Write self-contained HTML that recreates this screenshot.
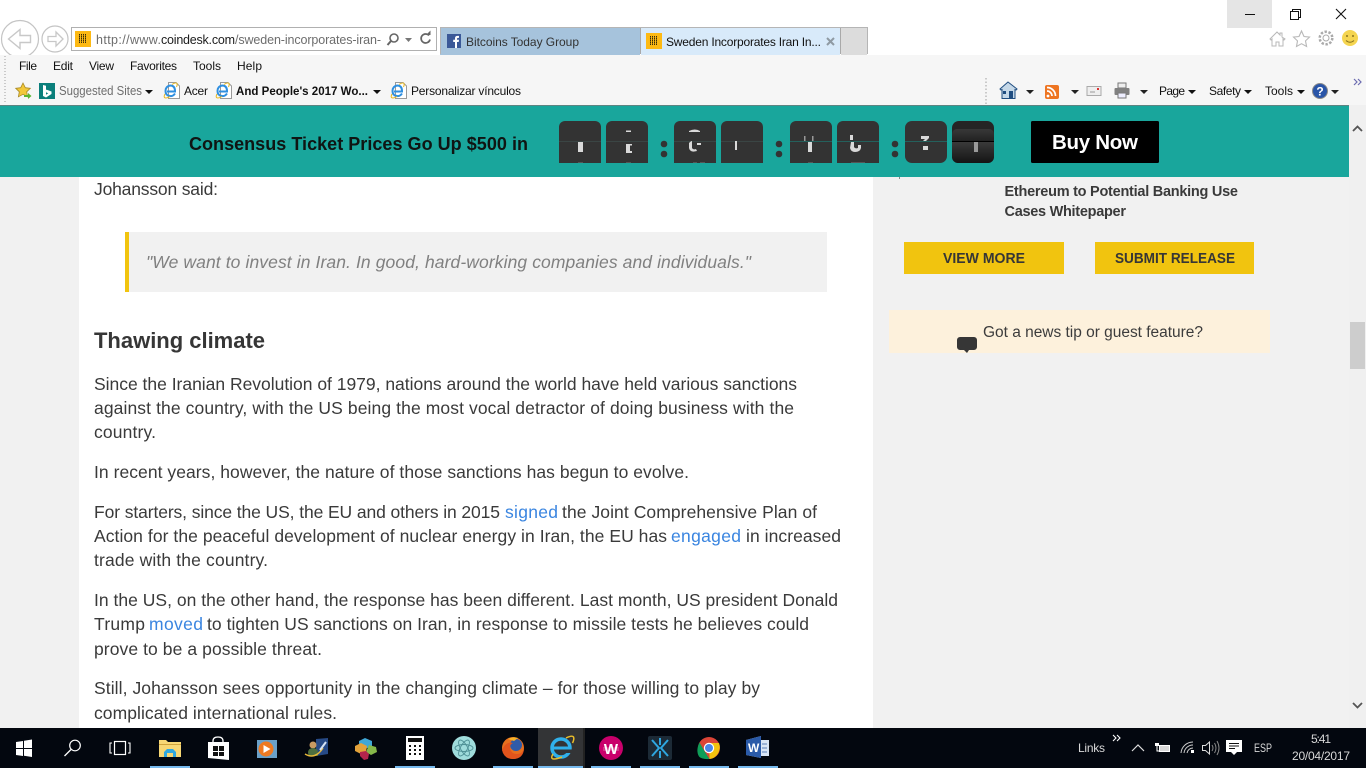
<!DOCTYPE html>
<html><head><meta charset="utf-8"><title>Sweden Incorporates Iran</title>
<style>
html,body{margin:0;padding:0;width:1366px;height:768px;overflow:hidden;background:#fff}
svg{display:block}
text{font-family:"Liberation Sans",sans-serif;white-space:pre}
.b{font-size:17.5px;fill:#3a3a3a}
.l{font-size:17.5px;fill:#3a85e0}
.m{font-size:12px;fill:#111}
.tb{font-size:12px;fill:#d8d8d8}
</style></head><body>
<svg width="1366" height="768" viewBox="0 0 1366 768" xmlns="http://www.w3.org/2000/svg">
<rect width="1366" height="768" fill="#fff"/>
<!-- window buttons -->
<rect x="1227" y="0" width="45" height="28" fill="#e5e5e5"/>
<rect x="1245" y="14" width="10" height="1" fill="#111"/>
<path d="M1290.500 11.500h8v8h-8zM1292.500 11.500v-2h8v8h-2" fill="none" stroke="#111"/>
<path d="M1336 9l10 10M1346 9l-10 10" stroke="#111" stroke-width="1.100"/>
<!-- nav buttons (drawn under the toolbar) -->
<circle cx="20" cy="39" r="18.500" fill="#fff" stroke="#c4c4c4" stroke-width="1.200"/>
<path d="M8.500 39L20 29.500v6h10.500v7H20v6z" fill="none" stroke="#c8c8c8" stroke-width="1.400"/>
<circle cx="55" cy="39" r="13" fill="#fff" stroke="#c4c4c4" stroke-width="1.200"/>
<path d="M63 39l-7-7v4.500h-8v5h8V46z" fill="none" stroke="#c8c8c8" stroke-width="1.300"/>
<!-- chrome bar -->
<rect x="0" y="55" width="1366" height="50" fill="#f6f6f6"/>
<!-- address bar -->
<rect x="71.500" y="27.500" width="365" height="23" fill="#fff" stroke="#b0b0b0"/>
<rect x="75" y="31" width="16" height="16" fill="#fdb913"/>
<path d="M79 34.500h8M79 36.500h8M79 38.500h8M79 40.500h8M79 42.500h8" stroke="#3a2c08" stroke-width="1" stroke-dasharray="1 1"/>
<path d="M79 35.500h8M79 37.500h8M79 39.500h8M79 41.500h8" stroke="#8a6a10" stroke-width="1" stroke-dasharray="1 1"/>
<text x="96" y="44" font-size="12.500" fill="#6d6d6d" textLength="65" lengthAdjust="spacing">http://www.</text>
<text x="161" y="44" font-size="12.500" fill="#1d1d1d" textLength="74" lengthAdjust="spacing">coindesk.com</text>
<text x="235" y="44" font-size="12.500" fill="#6d6d6d" textLength="146" lengthAdjust="spacing">/sweden-incorporates-iran-</text>
<circle cx="394" cy="38" r="4" fill="none" stroke="#666" stroke-width="1.600"/><path d="M391 41l-3.500 4" stroke="#666" stroke-width="2"/>
<path d="M405 38h7l-3.500 4z" fill="#777"/>
<path d="M429 35.500a4.500 4.500 0 1 0 1 4" fill="none" stroke="#666" stroke-width="1.700"/><path d="M426 35h4.500v-4.500z" fill="#666"/>
<!-- tabs -->
<rect x="440" y="27" width="428" height="1" fill="#b5b5b5"/>
<rect x="440" y="28" width="200" height="27" fill="#a6c3dc"/>
<rect x="640" y="28" width="1" height="26" fill="#a9a9a9"/>
<rect x="641" y="28" width="199" height="27" fill="#d8eafa"/>
<rect x="840" y="28" width="1" height="26" fill="#a9a9a9"/>
<rect x="841" y="28" width="26" height="27" fill="#dcdcdc"/>
<rect x="867" y="27" width="1" height="27" fill="#b5b5b5"/>
<rect x="440" y="28" width="1" height="26" fill="#b5b5b5"/>
<rect x="447" y="34" width="14" height="14" fill="#3b5998"/>
<path d="M455 48v-6h-1.800v-2.200h1.800v-1.600q0-2.300 2.500-2.300h1.500v2h-1q-1 0-1 1v.9h2l-.3 2.200h-1.700v6z" fill="#fff"/>
<text x="466" y="46" class="m" style="fill:#333" textLength="113" lengthAdjust="spacing">Bitcoins Today Group</text>
<rect x="646" y="33" width="16" height="16" fill="#fdb913"/>
<path d="M650 36.500h8M650 38.500h8M650 40.500h8M650 42.500h8M650 44.500h8" stroke="#3a2c08" stroke-width="1" stroke-dasharray="1 1"/>
<path d="M650 37.500h8M650 39.500h8M650 41.500h8M650 43.500h8" stroke="#8a6a10" stroke-width="1" stroke-dasharray="1 1"/>
<text x="666" y="46" class="m" textLength="155" lengthAdjust="spacing">Sweden Incorporates Iran In...</text>
<path d="M827 38l7 7M834 38l-7 7" stroke="#8f9aa3" stroke-width="2"/>
<!-- top-right icons -->
<path d="M1270 39l7-7 3 3v-2h2v4l3 2-1 1-1-1v7h-4v-4h-3v4h-4v-7l-1 1z" fill="#fff" stroke="#b8b8b8"/>
<path d="M1301.500 31l2.500 5.500 5.500.6-4 3.800 1.100 5.600-5.100-2.800-5 2.800 1-5.600-4-3.800 5.500-.6z" fill="#fff" stroke="#b8b8b8" stroke-width="1.100"/>
<circle cx="1326" cy="38" r="3" fill="none" stroke="#aaa"/><circle cx="1326" cy="38" r="6.300" fill="none" stroke="#aaa" stroke-width="2.500" stroke-dasharray="2.400 1.600"/>
<circle cx="1350" cy="38" r="8" fill="#f5d550"/><circle cx="1347" cy="36" r="1" fill="#8a7420"/><circle cx="1353" cy="36" r="1" fill="#8a7420"/>
<path d="M1346 40.500q4 3.500 8 0" fill="none" stroke="#8a7420"/>
<!-- menu -->
<path d="M5 56v48" stroke="#bbb" stroke-dasharray="1 2" stroke-width="1.500"/>
<text x="19" y="70" class="m" textLength="18" lengthAdjust="spacing">File</text>
<text x="53" y="70" class="m" textLength="20" lengthAdjust="spacing">Edit</text>
<text x="89" y="70" class="m" textLength="25" lengthAdjust="spacing">View</text>
<text x="130" y="70" class="m" textLength="47" lengthAdjust="spacing">Favorites</text>
<text x="193" y="70" class="m" textLength="28" lengthAdjust="spacing">Tools</text>
<text x="237" y="70" class="m" textLength="25" lengthAdjust="spacing">Help</text>
<!-- favorites bar -->
<path d="M23 83l2.300 4.700 5 .6-3.600 3.500.9 5-4.600-2.500-4.600 2.500.9-5-3.600-3.500 5-.6z" fill="#f2c83a" stroke="#a98a25" stroke-width=".8"/>
<path d="M24 95h4v-2l3.500 3-3.500 3v-2h-4z" fill="#5cb531"/>
<rect x="39" y="83" width="16" height="16" fill="#0b7f7b"/>
<path d="M43 85v11l3 1.500 5.500-3.500v-2.500l-4-1.500-2-.5.800 3 2 .8-2.300 1.400v-9z" fill="#fff"/>
<text x="59" y="95" font-size="12.500" fill="#6e6e6e" textLength="83" lengthAdjust="spacingAndGlyphs">Suggested Sites</text>
<path d="M145 90h8l-4 4z" fill="#111"/>
<g id="ie1">
<path d="M168.500 82.500h7.500l3.500 3.500v12.500h-11z" fill="#fff" stroke="#9a9a9a"/>
<path d="M175 93.500q-2 3-5 2.500-4.500-.5-4.500-5t4.500-5.500q5 0 5 5.500v.5h-8" fill="none" stroke="#2f8fe0" stroke-width="2"/>
<path d="M165 94q-2 4 1 4 2 0 4-1.500M172 84.500q4-2.500 5-1 .5 1.500-.5 3.500" fill="none" stroke="#e8b820" stroke-width="1"/>
</g>
<text x="184" y="95" class="m" textLength="24" lengthAdjust="spacing">Acer</text>
<use href="#ie1" x="52"/>
<text x="236" y="95" class="m" font-weight="bold" textLength="132" lengthAdjust="spacingAndGlyphs">And People's 2017 Wo...</text>
<path d="M373 90h8l-4 4z" fill="#111"/>
<use href="#ie1" x="227"/>
<text x="411" y="95" class="m" textLength="110" lengthAdjust="spacing">Personalizar vínculos</text>
<!-- right toolbar -->
<path d="M986 78v26" stroke="#bbb" stroke-dasharray="1.500 2" stroke-width="1.500"/>
<path d="M1008 82l-8 7 1 1 1-.5v9h13v-9l1 .5 1-1z" fill="#c5d8e8" stroke="#1f4d80"/>
<rect x="1009" y="91" width="4" height="8" fill="#1f4d80"/><rect x="1003" y="91" width="3" height="3" fill="#1f4d80"/>
<path d="M1026 90h8l-4 4zM1071 90h8l-4 4zM1140 90h8l-4 4z" fill="#222"/>
<rect x="1045" y="85" width="14" height="14" rx="2" fill="#ee7522"/>
<circle cx="1048" cy="96" r="1.400" fill="#fff"/><path d="M1047 91a5 5 0 0 1 5 5M1047 87.500a8.500 8.500 0 0 1 8.500 8.500" fill="none" stroke="#fff" stroke-width="1.700"/>
<rect x="1087" y="86.500" width="14" height="9" fill="#eee" stroke="#aaa"/><path d="M1090 92h5" stroke="#999"/><rect x="1097" y="88" width="2" height="2" fill="#d33"/>
<rect x="1118" y="83" width="8" height="5" fill="#eee" stroke="#777"/>
<rect x="1114.500" y="88" width="15" height="7" rx="1" fill="#808080"/>
<rect x="1118" y="93" width="8" height="5" fill="#eef" stroke="#777"/>
<text x="1159" y="95" class="m" textLength="26" lengthAdjust="spacing">Page</text><path d="M1188 90h8l-4 4z" fill="#111"/>
<text x="1209" y="95" class="m" textLength="32" lengthAdjust="spacing">Safety</text><path d="M1244 90h8l-4 4z" fill="#111"/>
<text x="1265" y="95" class="m" textLength="28" lengthAdjust="spacing">Tools</text><path d="M1297 90h8l-4 4z" fill="#111"/>
<circle cx="1320" cy="91" r="7.500" fill="#2a55a8" stroke="#8a8a8a" stroke-width="1"/>
<text x="1320" y="95.500" font-size="12" font-weight="bold" text-anchor="middle" style="fill:#fff">?</text>
<path d="M1331 90h8l-4 4z" fill="#222"/>
<path d="M1354 79l3 3-3 3M1358 79l3 3-3 3" fill="none" stroke="#6b6bb0" stroke-width="1.200"/>
<!-- page -->
<rect x="0" y="105" width="1366" height="623" fill="#f1f1f1"/>
<rect x="79" y="177" width="794" height="551" fill="#fff"/>
<!-- scrollbar -->
<rect x="1349" y="105" width="17" height="623" fill="#f0f0f0"/>
<rect x="1350" y="322" width="15" height="47" fill="#cdcdcd"/>
<path d="M1353 131l4.500-4.500 4.500 4.500M1353 703l4.500 4.500 4.500-4.500" fill="none" stroke="#555" stroke-width="1.800"/>
<!-- article -->
<text x="94" y="195" class="b" textLength="124" lengthAdjust="spacing">Johansson said:</text>
<rect x="125" y="232" width="702" height="60" fill="#f1f1f1"/>
<rect x="125" y="232" width="4" height="60" fill="#f1c40f"/>
<text x="146" y="268" font-size="17.500" font-style="italic" fill="#808080" textLength="605" lengthAdjust="spacing">"We want to invest in Iran. In good, hard-working companies and individuals."</text>
<text x="94" y="348" font-size="22" font-weight="bold" fill="#363636" textLength="171" lengthAdjust="spacing">Thawing climate</text>
<text x="94" y="390" class="b" textLength="703" lengthAdjust="spacing">Since the Iranian Revolution of 1979, nations around the world have held various sanctions</text>
<text x="94" y="414" class="b" textLength="700" lengthAdjust="spacing">against the country, with the US being the most vocal detractor of doing business with the</text>
<text x="94" y="438" class="b" textLength="62" lengthAdjust="spacing">country.</text>
<text x="94" y="478" class="b" textLength="595" lengthAdjust="spacing">In recent years, however, the nature of those sanctions has begun to evolve.</text>
<text x="94" y="518" class="b" textLength="406" lengthAdjust="spacing">For starters, since the US, the EU and others in 2015</text>
<text x="505" y="518" class="l" textLength="53" lengthAdjust="spacing">signed</text>
<text x="562" y="518" class="b" textLength="255" lengthAdjust="spacing">the Joint Comprehensive Plan of</text>
<text x="94" y="542" class="b" textLength="573" lengthAdjust="spacing">Action for the peaceful development of nuclear energy in Iran, the EU has</text>
<text x="671" y="542" class="l" textLength="70" lengthAdjust="spacing">engaged</text>
<text x="746" y="542" class="b" textLength="95" lengthAdjust="spacing">in increased</text>
<text x="94" y="566" class="b" textLength="174" lengthAdjust="spacing">trade with the country.</text>
<text x="94" y="606" class="b" textLength="744" lengthAdjust="spacing">In the US, on the other hand, the response has been different. Last month, US president Donald</text>
<text x="94" y="630" class="b" textLength="51" lengthAdjust="spacing">Trump</text>
<text x="149" y="630" class="l" textLength="54" lengthAdjust="spacing">moved</text>
<text x="207" y="630" class="b" textLength="602" lengthAdjust="spacing">to tighten US sanctions on Iran, in response to missile tests he believes could</text>
<text x="94" y="655" class="b" textLength="228" lengthAdjust="spacing">prove to be a possible threat.</text>
<text x="94" y="694" class="b" textLength="666" lengthAdjust="spacing">Still, Johansson sees opportunity in the changing climate – for those willing to play by</text>
<text x="94" y="719" class="b" textLength="243" lengthAdjust="spacing">complicated international rules.</text>
<!-- sidebar -->
<text x="1004.500" y="196" font-size="14.500" font-weight="bold" fill="#3a3a3a" textLength="233.500" lengthAdjust="spacing">Ethereum to Potential Banking Use</text>
<text x="1004.500" y="216" font-size="14.500" font-weight="bold" fill="#3a3a3a" textLength="121.500" lengthAdjust="spacing">Cases Whitepaper</text>
<rect x="904" y="242" width="160" height="32" fill="#f1c40f"/>
<rect x="1095" y="242" width="159" height="32" fill="#f1c40f"/>
<text x="943" y="263" font-size="14.500" font-weight="bold" fill="#363636" textLength="82" lengthAdjust="spacingAndGlyphs">VIEW MORE</text>
<text x="1115" y="263" font-size="14.500" font-weight="bold" fill="#363636" textLength="120" lengthAdjust="spacingAndGlyphs">SUBMIT RELEASE</text>
<rect x="889" y="310" width="381" height="43" fill="#fdf1dc"/>
<text x="983" y="337" font-size="15.500" fill="#3c3c3c" textLength="220" lengthAdjust="spacing">Got a news tip or guest feature?</text>
<path d="M960 337h14a3 3 0 0 1 3 3v7a3 3 0 0 1-3 3h-5l-2 3-3-3h-4a3 3 0 0 1-3-3v-7a3 3 0 0 1 3-3z" fill="#363636"/>
<!-- banner -->
<rect x="0" y="105" width="1349" height="72" fill="#19a69c"/>
<rect x="0" y="105" width="1349" height="1" fill="#5e8482"/>
<rect x="899" y="177" width="1" height="2" fill="#888"/>
<text x="189" y="150" font-size="18" font-weight="bold" fill="#0f1513" textLength="339" lengthAdjust="spacing">Consensus Ticket Prices Go Up $500 in</text>
<rect x="1031" y="121" width="128" height="42" rx="1.500" fill="#000"/>
<text x="1052" y="149" font-size="20.500" font-weight="bold" fill="#fff" textLength="86" lengthAdjust="spacing">Buy Now</text>
<g fill="#333">
<path d="M559 163v-36a6 6 0 0 1 6-6h30a6 6 0 0 1 6 6v36z"/>
<path d="M606 163v-36a6 6 0 0 1 6-6h30a6 6 0 0 1 6 6v36z"/>
<path d="M674 163v-36a6 6 0 0 1 6-6h30a6 6 0 0 1 6 6v36z"/>
<path d="M721 163v-36a6 6 0 0 1 6-6h30a6 6 0 0 1 6 6v36z"/>
<path d="M790 163v-36a6 6 0 0 1 6-6h30a6 6 0 0 1 6 6v36z"/>
<path d="M837 163v-36a6 6 0 0 1 6-6h30a6 6 0 0 1 6 6v36z"/>
<rect x="905" y="121" width="42" height="42" rx="7"/>
<circle cx="664" cy="144" r="3.300"/><circle cx="664" cy="154" r="3.300"/>
<circle cx="779" cy="144" r="3.300"/><circle cx="779" cy="154" r="3.300"/>
<circle cx="895" cy="144" r="3.300"/><circle cx="895" cy="154" r="3.300"/>
</g>
<defs><linearGradient id="g1" x1="0" y1="0" x2="0" y2="1"><stop offset="0" stop-color="#383838"/><stop offset="1" stop-color="#222"/></linearGradient>
<linearGradient id="g2" x1="0" y1="0" x2="0" y2="1"><stop offset="0" stop-color="#3a3a3a"/><stop offset="1" stop-color="#141414"/></linearGradient></defs>
<rect x="952" y="121" width="42" height="42" rx="7" fill="#252525"/>
<rect x="952" y="129" width="42" height="12" rx="5" fill="url(#g1)"/>
<rect x="952" y="141" width="42" height="1" fill="#000"/>
<path d="M952 142h42v15a6 6 0 0 1-6 6h-30a6 6 0 0 1-6-6z" fill="url(#g2)"/>
<path d="M559 141.500h42M606 141.500h42M674 141.500h42M721 141.500h42" stroke="#3a4544" stroke-width="1"/>
<path d="M790 141.500h42M837 141.500h42M905 141.500h42" stroke="#24605c" stroke-width="1"/>
<g fill="#d9d9d9">
<rect x="578" y="142" width="5" height="10"/>
<rect x="626" y="144" width="4" height="9"/><rect x="630" y="144" width="2" height="1.500"/><rect x="630" y="151" width="2" height="2"/><rect x="626" y="130.500" width="5" height="1.500"/>
<path d="M689 131q6-3 11 0v1h-11zM689 143q2-2 3-2v7q1 2 4 1l1 2q-7 2-8-3zM697 143h4v2h-4z"/>
<rect x="735" y="141" width="2" height="9"/>
<rect x="804" y="136" width="1.500" height="5" fill="#999"/><rect x="812" y="136" width="1.500" height="5" fill="#999"/><rect x="808" y="142" width="4" height="10"/>
<path d="M850 135h3v5h-3zM851 142h3v5q1 2 4 1v-3h3v3q-1 4-6 4-4 0-5-4z"/>
<path d="M921 136h8v2l-3 3h-3l2-2h-4zM923 146h5v4h-5z"/>
<rect x="974" y="142" width="4" height="10" fill="#9a9a9a"/>
</g>
<g fill="#555"><rect x="578" y="162" width="5" height="1"/><rect x="626" y="162" width="5" height="1"/><rect x="693" y="162" width="4" height="1"/><rect x="700" y="162" width="5" height="1"/><rect x="808" y="162" width="5" height="1"/><rect x="851" y="162" width="14" height="1"/></g>
<!-- taskbar -->
<rect x="0" y="728" width="1366" height="40" fill="#03070f"/>
<rect x="538" y="728" width="47" height="40" fill="#333436"/>
<rect x="583" y="728" width="2" height="40" fill="#222"/>
<g fill="#76b9ed">
<rect x="150" y="766" width="40" height="2"/><rect x="395" y="766" width="40" height="2"/><rect x="493" y="766" width="40" height="2"/><rect x="538" y="766" width="45" height="2"/><rect x="591" y="766" width="40" height="2"/><rect x="640" y="766" width="40" height="2"/><rect x="689" y="766" width="40" height="2"/><rect x="738" y="766" width="40" height="2"/>
</g>
<path d="M16 742l7-1v7h-7zM24 740.800l8-1.300v8.500h-8zM16 749h7v7l-7-1zM24 749h8v8l-8-1.200z" fill="#fff"/>
<circle cx="75" cy="745.500" r="5.300" fill="none" stroke="#fff" stroke-width="1.200"/><path d="M71 749.500l-6.500 6.500" stroke="#fff" stroke-width="1.300"/>
<rect x="114.500" y="741.500" width="11" height="13" fill="none" stroke="#fff" stroke-width="1.200"/>
<path d="M112 743h-2v10h2M128 743h2v10h-2" fill="none" stroke="#fff" stroke-width="1.100"/>
<!-- explorer -->
<path d="M159 740h7l2 2h13v15h-22z" fill="#f7d774"/><rect x="159" y="744" width="22" height="1" fill="#cfa33c"/>
<path d="M164 757v-5l3-3h6l3 3v5h-3v-4h-6v4z" fill="#2fa8e0"/>
<!-- store -->
<path d="M208 742h21v18l-21-2z" fill="#fff"/><path d="M213 742v-1q0-4 5-4t5 4v1" fill="none" stroke="#fff" stroke-width="1.300"/>
<path d="M213 746h5v5h-5zM219 746h5v5h-5zM213 752h5v4h-5zM219 752h5v4h-5z" fill="#111"/>
<!-- media -->
<rect x="257" y="740" width="20" height="18" fill="#6aa0c8"/><circle cx="266" cy="749" r="7.500" fill="#ee7a22"/><path d="M263.500 745l7 4-7 4z" fill="#fff"/>
<!-- person -->
<path d="M316 739l12-1v16l-12 2z" fill="#274a86"/><circle cx="313" cy="745" r="3.500" fill="#c89a62"/><path d="M308 753q0-5 5-5t5 5v3h-9z" fill="#4d6f3f"/><path d="M305 754q10 6 18-6" fill="none" stroke="#e8b93a" stroke-width="1.500"/><path d="M320 750l6-8" stroke="#d7e4f5" stroke-width="2"/>
<!-- cubes -->
<path d="M365 738l7 3v5l-7 3-6-3v-5z" fill="#3fa7d6"/><path d="M355 746l6-3 6 3-1 6-5 2-6-3z" fill="#e3a23a"/><path d="M369 745l7 2 1 5-6 3-5-3z" fill="#86b84a"/><path d="M360 752l6-1 3 3-1 5-4 1-4-4z" fill="#b3244c"/>
<!-- calc -->
<rect x="406" y="736" width="18" height="24" fill="#fff"/><rect x="408" y="738" width="14" height="4" fill="#111"/>
<g fill="#111"><rect x="409" y="745" width="2" height="2"/><rect x="414" y="745" width="2" height="2"/><rect x="419" y="745" width="2" height="2"/><rect x="409" y="749" width="2" height="2"/><rect x="414" y="749" width="2" height="2"/><rect x="419" y="749" width="2" height="2"/><rect x="409" y="753" width="2" height="2"/><rect x="414" y="753" width="2" height="2"/><rect x="419" y="753" width="2" height="2"/></g>
<!-- atom -->
<circle cx="464" cy="748" r="12" fill="#9fdcdc"/><g fill="none" stroke="#4e8f95" stroke-width=".9"><ellipse cx="464" cy="748" rx="9" ry="3.500"/><ellipse cx="464" cy="748" rx="9" ry="3.500" transform="rotate(60 464 748)"/><ellipse cx="464" cy="748" rx="9" ry="3.500" transform="rotate(120 464 748)"/></g>
<!-- firefox -->
<circle cx="513" cy="748" r="11" fill="#e76f1e"/><circle cx="516" cy="745" r="6" fill="#2f5ba8"/><path d="M502 750q2 9 11 9 10 0 11-10-2 5-7 5-6 0-7-6 0-4 3-5-7-2-11 7z" fill="#e2541c"/><path d="M508 739q5-3 10-1l-4 3z" fill="#f6b128"/>
<!-- IE -->
<circle cx="561" cy="748" r="9" fill="none" stroke="#30b0ea" stroke-width="3.500"/><rect x="553" y="746.500" width="17" height="3" fill="#30b0ea"/><rect x="561" y="749.500" width="12" height="3.500" fill="#333436"/><path d="M553 754q-3 5 1 5 3 0 8-2M566 738q6-3 7.500-1 1 2-1 6" fill="none" stroke="#e9bd2a" stroke-width="1.500"/>
<!-- wallet -->
<circle cx="611" cy="748" r="12" fill="#c9006b"/><path d="M603 748h16M603 750h16" stroke="#e98ab8" stroke-width=".7"/><text x="611" y="754" font-size="15" font-weight="bold" text-anchor="middle" style="fill:#fff">W</text>
<!-- blue x -->
<rect x="648" y="736" width="24" height="24" rx="2" fill="#1c2a36"/><path d="M652 740l7 8-7 8M668 740l-7 8 7 8M660 738v7M660 751v7" fill="none" stroke="#2ea6e0" stroke-width="2"/>
<!-- chrome -->
<circle cx="709" cy="748" r="11" fill="#db4437"/><path d="M699.500 742.500l5.500 9.500 4.500 7q-8 .5-10.500-2.500-3.500-6 .5-14z" fill="#0f9d58"/><path d="M709 743h10q2 5-1 10.500-3 5-8.500 5.500z" fill="#f4c20d"/><circle cx="709" cy="748" r="5.200" fill="#fff"/><circle cx="709" cy="748" r="4" fill="#4a86e8"/>
<!-- word -->
<path d="M746 740l15-4v4h8v16h-8v2l-15-3z" fill="#d9e5f5"/><path d="M746 740l15-4v22l-15-3z" fill="#2a5aa8"/><text x="748" y="752" font-size="12" font-weight="bold" style="fill:#fff">W</text><path d="M762 744h5M762 748h5M762 752h5" stroke="#5a7fb8"/>
<!-- tray -->
<text x="1078" y="752" class="tb" textLength="27" lengthAdjust="spacing">Links</text>
<path d="M1113 735l3 3-3 3M1117 735l3 3-3 3" fill="none" stroke="#fff" stroke-width="1.100"/>
<path d="M1132 751l6-6 6 6" fill="none" stroke="#ddd" stroke-width="1.200"/>
<path d="M1155 743h4v3h-1.500v2h-1v-2h-1.500z" fill="#fff"/><rect x="1159.500" y="745.500" width="10" height="6" fill="#d8d8d8" stroke="#fff"/><path d="M1157 748v3h2" fill="none" stroke="#fff"/>
<path d="M1181 753a12 12 0 0 1 12-11M1184 753a9 9 0 0 1 9-8M1187 753a6 6 0 0 1 6-5" fill="none" stroke="#ccc"/><rect x="1191" y="750" width="3" height="3" fill="#fff"/>
<path d="M1202.500 745.500h3l4-3.500v12l-4-3.500h-3z" fill="none" stroke="#ddd"/><path d="M1212 745q2 3 0 6M1214.500 743q3 5 0 10M1217 741q4 7 0 14" fill="none" stroke="#888"/>
<path d="M1226 740h16v12h-5l-3 3-3-3h-5z" fill="#fff"/><path d="M1229 743.500h10M1229 746h10M1229 748.500h6" stroke="#111"/>
<text x="1254" y="752" class="tb" textLength="18" lengthAdjust="spacingAndGlyphs">ESP</text>
<text x="1311" y="743" class="tb" textLength="20" lengthAdjust="spacing">5:41</text>
<text x="1292" y="760" class="tb" textLength="58" lengthAdjust="spacing">20/04/2017</text>
</svg>
</body></html>
